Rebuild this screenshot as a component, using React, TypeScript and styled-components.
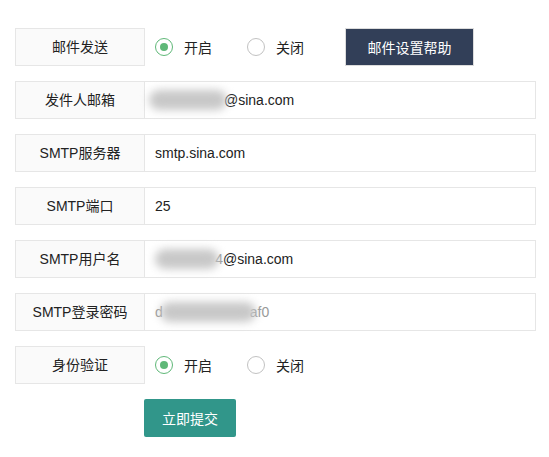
import React, { useState } from 'react';
import styled, { createGlobalStyle } from 'styled-components';

const GlobalStyle = createGlobalStyle`
  body {
    margin: 0;
    background: #fff;
    font-family: "Liberation Sans", Arial, "Noto Sans CJK SC", sans-serif;
    font-size: 14px;
    color: #333;
  }
`;

interface BlurProps {
  width: number;
  left: number;
}

const RadioGroup: React.FunctionComponent<{ name: string }> = ({ name }) => {
  const [value, setValue] = useState<string>('on');

  return (
    <Radios>
      <RadioItem onClick={() => setValue('on')}>
        <RadioCircle checked={value === 'on'} />
        <RadioText>开启</RadioText>
      </RadioItem>
      <RadioItem onClick={() => setValue('off')}>
        <RadioCircle checked={value === 'off'} />
        <RadioText>关闭</RadioText>
      </RadioItem>
      <input type="hidden" name={name} value={value} />
    </Radios>
  );
};

const App: React.FunctionComponent = () => (
  <>
    <GlobalStyle />
    <Form>
      <Row>
        <Label>邮件发送</Label>
        <RadioGroup name="mail" />
        <HelpButton type="button">邮件设置帮助</HelpButton>
      </Row>

      <Row>
        <Label>发件人邮箱</Label>
        <Field>
          <Masked width={69}>
            <Blur width={78} left={-6} />
          </Masked>
          @sina.com
        </Field>
      </Row>

      <Row>
        <Label>SMTP服务器</Label>
        <Field>smtp.sina.com</Field>
      </Row>

      <Row>
        <Label>SMTP端口</Label>
        <Field>25</Field>
      </Row>

      <Row>
        <Label>SMTP用户名</Label>
        <Field>
          <Masked width={68}>
            <Faint>4</Faint>
            <Blur width={64} left={0} />
          </Masked>
          @sina.com
        </Field>
      </Row>

      <Row>
        <Label>SMTP登录密码</Label>
        <Field>
          <Faint>d</Faint>
          <Masked width={87}>
            <Blur width={96} left={-3} />
          </Masked>
          <Faint>af0</Faint>
        </Field>
      </Row>

      <Row>
        <Label>身份验证</Label>
        <RadioGroup name="auth" />
      </Row>

      <SubmitRow>
        <SubmitButton type="button">立即提交</SubmitButton>
      </SubmitRow>
    </Form>
  </>
);

const Form = styled.form`
  padding: 28px 0 0 15px;
`;

const Row = styled.div`
  align-items: center;
  display: flex;
  height: 38px;
  margin-bottom: 15px;
`;

const Label = styled.div`
  background: #fafafa;
  border: 1px solid #e6e6e6;
  box-sizing: border-box;
  color: #222;
  flex: none;
  height: 38px;
  line-height: 36px;
  text-align: center;
  width: 130px;
`;

const Field = styled.div`
  border: 1px solid #e6e6e6;
  border-left: none;
  box-sizing: border-box;
  color: #222;
  height: 38px;
  line-height: 36px;
  padding-left: 10px;
  white-space: nowrap;
  width: 391px;
`;

const Masked = styled.span<{ width: number }>`
  display: inline-block;
  height: 36px;
  position: relative;
  text-align: right;
  vertical-align: top;
  width: ${({ width }) => width}px;
`;

const Faint = styled.span`
  color: #999;
`;

const Blur = styled.span<BlurProps>`
  background: #c8c8c8;
  border-radius: 12px;
  filter: blur(4px);
  height: 20px;
  left: ${({ left }) => left}px;
  position: absolute;
  top: 8px;
  width: ${({ width }) => width}px;
`;

const Radios = styled.div`
  align-items: center;
  display: flex;
  margin-left: 10px;
`;

const RadioItem = styled.label`
  align-items: center;
  cursor: pointer;
  display: flex;
  margin-right: 35px;
`;

const RadioCircle = styled.span<{ checked: boolean }>`
  border: 1.5px solid ${({ checked }) => (checked ? '#5fb878' : '#c2c2c2')};
  border-radius: 50%;
  box-sizing: border-box;
  height: 18px;
  margin-right: 11px;
  position: relative;
  width: 18px;

  &::after {
    background: #5fb878;
    border-radius: 50%;
    content: '';
    display: ${({ checked }) => (checked ? 'block' : 'none')};
    height: 8px;
    left: 3.5px;
    position: absolute;
    top: 3.5px;
    width: 8px;
  }
`;

const RadioText = styled.span`
  color: #222;
`;

const HelpButton = styled.button`
  background: #323f58;
  border: 1px solid #dcdcdc;
  box-sizing: border-box;
  color: #fff;
  cursor: pointer;
  font-family: inherit;
  font-size: 14px;
  height: 38px;
  margin-left: 6px;
  width: 129px;
`;

const SubmitRow = styled.div`
  padding-left: 129px;
`;

const SubmitButton = styled.button`
  background: #31968a;
  border: none;
  border-radius: 2px;
  color: #fff;
  cursor: pointer;
  font-family: inherit;
  font-size: 14px;
  height: 38px;
  width: 92px;
`;

export default App;
